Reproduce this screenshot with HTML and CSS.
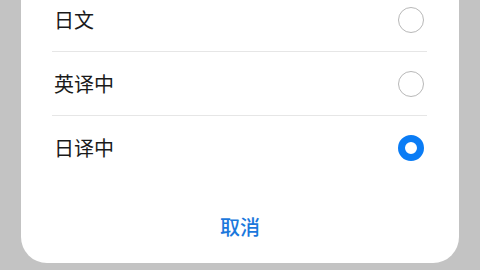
FILE: index.html
```html
<!DOCTYPE html>
<html lang="zh-CN">
<head>
  <meta charset="UTF-8">
  <meta name="viewport" content="width=device-width, initial-scale=1.0">
  <title>翻译语言</title>
  <link rel="stylesheet" href="styles.css">
</head>
<body>
  <div class="sheet">
    <ul class="option_list">
      <li class="option">
        <span class="option_text">日文</span>
        <span class="radio"></span>
      </li>
      <li class="option">
        <span class="option_text">英译中</span>
        <span class="radio"></span>
      </li>
      <li class="option last">
        <span class="option_text">日译中</span>
        <span class="radio checked"></span>
      </li>
    </ul>
    <div class="cancel">取消</div>
  </div>
</body>
</html>
```

FILE: styles.css
```css
html, body {
  margin: 0;
  height: 100%;
}
body {
  background-color: #c3c3c3;
  font-family: 'Noto Sans CJK SC', 'Noto Sans', sans-serif;
  overflow: hidden;
}
.sheet {
  margin: -12px 21px 0;
  padding-bottom: 4px;
  background-color: #fff;
  border-radius: 0 0 26px 26px;
}
.option_list {
  list-style: none;
  margin: 0 32px 0 31px;
  padding: 0;
}
.option {
  display: flex;
  align-items: center;
  justify-content: space-between;
  height: 63px;
  border-bottom: 1px solid #e6e6e6;
}
.option.last {
  border-bottom: none;
  height: 63px;
}
.option_text {
  padding-left: 2px;
  font-size: 20px;
  color: #1a1a1a;
}
.radio {
  box-sizing: border-box;
  width: 26px;
  height: 26px;
  margin-right: 3px;
  border: 1.5px solid #b8b8b8;
  border-radius: 50%;
}
.radio.checked {
  border: 7px solid #0a7cf5;
}
.cancel {
  margin-top: 16px;
  height: 64px;
  line-height: 64px;
  text-align: center;
  font-size: 20px;
  font-weight: 500;
  color: #1b78dc;
}
```
